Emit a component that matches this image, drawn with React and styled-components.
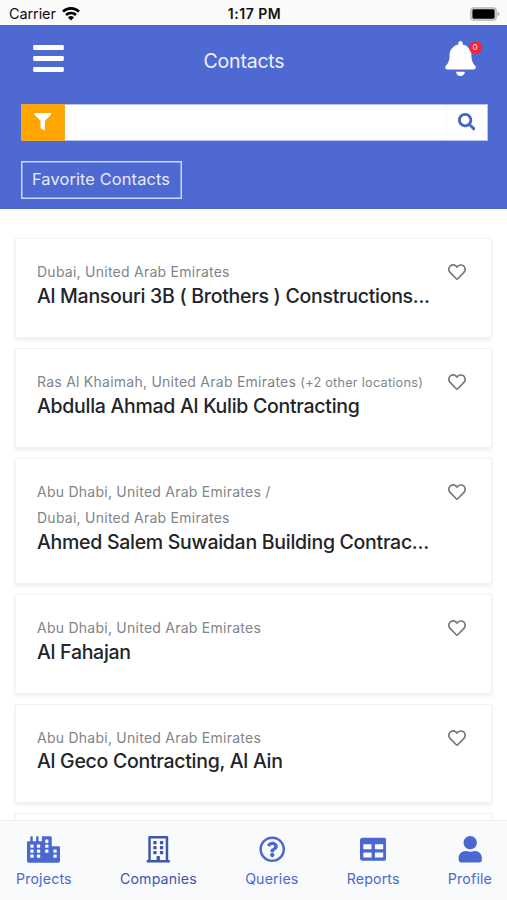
import React from 'react';
import styled, { createGlobalStyle } from 'styled-components';
import {
  FaBars,
  FaBell,
  FaCity,
  FaFilter,
  FaRegBuilding,
  FaRegHeart,
  FaRegQuestionCircle,
  FaSearch,
  FaTable,
  FaUser,
} from 'react-icons/fa';

const GlobalStyle = createGlobalStyle`
  * {
    box-sizing: border-box;
  }

  body {
    margin: 0;
    background: #fff;
    font-family: Inter, "Liberation Sans", sans-serif;
    color: #212529;
  }
`

const Screen = styled.div`
  display: flex;
  flex-direction: column;
  width: 507px;
  height: 900px;
  overflow: hidden;
`

const StatusBar = styled.div`
  display: grid;
  grid-template-columns: 1fr auto 1fr;
  align-items: center;
  flex: none;
  height: 25px;
  padding: 2px 7px 0 9px;
  background: #fafafa;
  color: #111;
  font-size: 14.5px;
  line-height: 23px;
`

const Carrier = styled.div`
  display: flex;
  align-items: center;
  gap: 6px;
  letter-spacing: -0.1px;
`

const Clock = styled.div`
  font-size: 14px;
  font-weight: 600;
  letter-spacing: 0.5px;
`

const Battery = styled.svg`
  display: block;
  justify-self: end;
`

const Header = styled.header`
  flex: none;
  height: 183.5px;
  padding: 0 19.5px 0 20.5px;
  background: #4e69d2;
  color: #fff;
`

const TitleRow = styled.div`
  display: grid;
  grid-template-columns: 1fr auto 1fr;
  align-items: center;
  height: 79px;
  padding: 0 10px;
`

const MenuButton = styled.div`
  display: flex;
  align-items: center;
  padding-bottom: 13px;
`

const PageTitle = styled.h1`
  margin: 0 20px 0 0;
  padding-bottom: 8px;
  font-size: 19.5px;
  font-weight: 400;
  line-height: 28px;
  letter-spacing: -0.2px;
  color: #eef1fc;
`

const BellButton = styled.div`
  position: relative;
  display: flex;
  justify-self: end;
  padding-bottom: 13px;
`

const Badge = styled.span`
  position: absolute;
  top: 0;
  right: -4px;
  width: 13px;
  height: 13px;
  border-radius: 50%;
  background: #f5243d;
  color: #ffe3e6;
  font-size: 8px;
  line-height: 13px;
  text-align: center;
`

const SearchBar = styled.div`
  display: flex;
  height: 37px;
  border: 1px solid #b9c4ee;
  background: #fff;
`

const FilterButton = styled.div`
  display: flex;
  align-items: center;
  justify-content: center;
  width: 44px;
  margin: -1px 0 -1px -1px;
  padding-bottom: 1px;
  border: 1px solid #eeaa30;
  background: #ffa500;
`

const SearchField = styled.div`
  flex: 1;
`

const SearchButton = styled.div`
  display: flex;
  align-items: center;
  justify-content: center;
  width: 41px;
  padding-bottom: 1px;
  border-left: 1px solid #f6f7fb;
  color: #4763c8;
`

const FavoriteButton = styled.div`
  width: 161px;
  height: 38px;
  margin-top: 20px;
  border: 1.5px solid #ccd6fa;
  box-shadow: inset 0 0 0 0.5px #ccd6fa;
  color: #e6ebfc;
  font-size: 16.4px;
  line-height: 35px;
  letter-spacing: 0.12px;
  text-align: center;
  white-space: nowrap;
`

const ContactList = styled.main`
  display: flex;
  flex-direction: column;
  flex: 1;
  gap: 10px;
  min-height: 0;
  padding: 29.5px 15px 0;
  overflow: hidden;
`

const Card = styled.article`
  display: flex;
  flex: none;
  align-items: flex-start;
  justify-content: space-between;
  padding: 20px 25px 30px 21px;
  border: 1px solid #f2f2f2;
  background: #fff;
  box-shadow: 0 2px 4px rgba(0, 0, 0, 0.07);

  & > svg {
    flex: none;
    margin-top: 4px;
    color: #74797e;
  }
`

const CardBody = styled.div`
  min-width: 0;
  white-space: nowrap;
`

const Location = styled.div`
  font-size: 14px;
  line-height: 25.7px;
  letter-spacing: 0.25px;
  color: #808589;
`

const More = styled.span`
  font-size: 12.7px;
`

const CompanyName = styled.h2`
  margin: 0;
  font-size: 19.5px;
  font-weight: 500;
  line-height: 22px;
  letter-spacing: -0.28px;
  color: #212529;
`

const NavBar = styled.nav`
  display: flex;
  flex: none;
  justify-content: space-between;
  height: 80px;
  padding: 15px 15px 0 16px;
  border-top: 1px solid #efefef;
  background: #f8fafc;
`

const NavItem = styled.div`
  display: flex;
  flex-direction: column;
  align-items: center;
  color: ${props => (props.$active ? '#3f55ae' : '#4c68d0')};
`

const NavIcon = styled.div`
  display: flex;
  align-items: center;
  height: 26.5px;
`

const NavLabel = styled.span`
  margin-top: 6px;
  font-size: 14.2px;
  line-height: 20px;
  letter-spacing: 0.15px;
`

const contacts = [
  { name: 'Al Mansouri 3B ( Brothers ) Constructions...', locations: ['Dubai, United Arab Emirates'] },
  {
    name: 'Abdulla Ahmad Al Kulib Contracting',
    locations: ['Ras Al Khaimah, United Arab Emirates'],
    more: '(+2 other locations)',
  },
  {
    name: 'Ahmed Salem Suwaidan Building Contrac...',
    locations: ['Abu Dhabi, United Arab Emirates /', 'Dubai, United Arab Emirates'],
  },
  { name: 'Al Fahajan', locations: ['Abu Dhabi, United Arab Emirates'] },
  { name: 'Al Geco Contracting, Al Ain', locations: ['Abu Dhabi, United Arab Emirates'] },
  { name: '', locations: [''] },
]

const tabs = [
  { label: 'Projects', icon: FaCity, size: 33 },
  { label: 'Companies', icon: FaRegBuilding, active: true },
  { label: 'Queries', icon: FaRegQuestionCircle },
  { label: 'Reports', icon: FaTable },
  { label: 'Profile', icon: FaUser },
]

const WifiIcon = () => (
  <svg width="18" height="14" viewBox="0 0 18 14" fill="none" stroke="#000" strokeWidth="2.6">
    <path d="M1 4.7a11.3 11.3 0 0 1 16 0" />
    <path d="M4 8a7.1 7.1 0 0 1 10 0" />
    <path d="M9 13.4 6 10.4a4.3 4.3 0 0 1 6 0Z" fill="#000" stroke="none" />
  </svg>
)

const ContactCard = ({ name, locations, more }) => (
  <Card>
    <CardBody>
      {locations.map(location => (
        <Location key={location}>
          {location} {more && <More>{more}</More>}
        </Location>
      ))}
      <CompanyName>{name}</CompanyName>
    </CardBody>
    <FaRegHeart size={18} />
  </Card>
)

const App = () => (
  <>
    <GlobalStyle />
    <Screen>
      <StatusBar>
        <Carrier>
          Carrier
          <WifiIcon />
        </Carrier>
        <Clock>1:17 PM</Clock>
        <Battery width="30" height="14" viewBox="0 0 30 14">
          <rect x="0.8" y="0.8" width="25.4" height="12.4" rx="3" fill="#ddd" stroke="#b4b4b4" strokeWidth="1.2" />
          <rect x="2.4" y="2.3" width="22.2" height="9.4" rx="1.4" fill="#000" />
          <path d="M27.4 4.7c1.3.5 2.1 1.3 2.1 2.3s-.8 1.8-2.1 2.3z" fill="#b4b4b4" />
        </Battery>
      </StatusBar>

      <Header>
        <TitleRow>
          <MenuButton>
            <FaBars size={35} />
          </MenuButton>
          <PageTitle>Contacts</PageTitle>
          <BellButton>
            <FaBell size={35} />
            <Badge>0</Badge>
          </BellButton>
        </TitleRow>
        <SearchBar>
          <FilterButton>
            <FaFilter size={17.5} />
          </FilterButton>
          <SearchField />
          <SearchButton>
            <FaSearch size={17.5} />
          </SearchButton>
        </SearchBar>
        <FavoriteButton>Favorite Contacts</FavoriteButton>
      </Header>

      <ContactList>
        {contacts.map(contact => (
          <ContactCard key={contact.name} {...contact} />
        ))}
      </ContactList>

      <NavBar>
        {tabs.map(({ label, icon: Icon, active, size }) => (
          <NavItem key={label} $active={active}>
            <NavIcon>
              <Icon size={size || 26.5} />
            </NavIcon>
            <NavLabel>{label}</NavLabel>
          </NavItem>
        ))}
      </NavBar>
    </Screen>
  </>
)

export default App
